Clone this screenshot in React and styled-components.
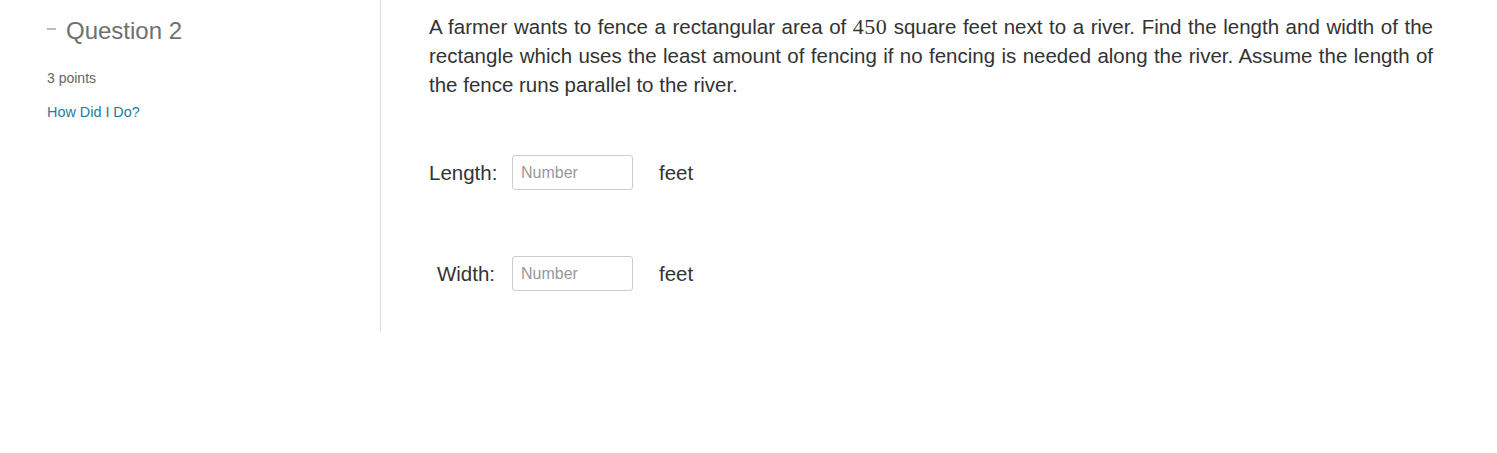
import React from 'react'
import styled, { createGlobalStyle } from 'styled-components'

const GlobalStyle = createGlobalStyle`
  body {
    margin: 0;
    background: #fff;
    font-family: "Liberation Sans", Arial, sans-serif;
  }
`;

const QuestionWrapper = styled.div`
  display: flex;
  width: 100%;
`;

const Sidebar = styled.div`
  box-sizing: border-box;
  width: 381px;
  min-height: 331px;
  padding: 16px 0 0 47px;
  border-right: 1px solid #dcdcdc;
`;

const Heading = styled.h2`
  margin: 0;
  font-size: 24px;
  font-weight: 400;
  line-height: 30px;
  color: #6f6f6f;
`;

const Dash = styled.span`
  display: inline-block;
  width: 9px;
  height: 2px;
  margin-right: 10px;
  background: #bdbdbd;
  vertical-align: middle;
  position: relative;
  top: -4px;
`;

const Points = styled.div`
  margin-top: 23px;
  font-size: 14px;
  line-height: 18px;
  color: #666;
`;

const HowLink = styled.a`
  display: block;
  margin-top: 16px;
  font-size: 14.4px;
  line-height: 18px;
  color: #1b7d9e;
  text-decoration: none;
  cursor: pointer;
`;

const Content = styled.div`
  box-sizing: border-box;
  flex: 1;
  padding: 12px 64px 0 48px;
`;

const Prompt = styled.p`
  margin: 0;
  font-size: 20.5px;
  line-height: 29px;
  color: #333;
  text-align: justify;
`;

const MathNum = styled.span`
  font-family: "Liberation Serif", "Times New Roman", serif;
  font-size: 22px;
  letter-spacing: 0.4px;
`;

const Answers = styled.div`
  display: flex;
  flex-direction: column;
  gap: 66px;
  margin-top: 56px;
`;

const Row = styled.div`
  display: flex;
  align-items: center;
  height: 35px;
`;

const Label = styled.label`
  width: ${p => p.$w}px;
  text-align: right;
  font-size: 20.5px;
  color: #333;
  margin-right: ${p => p.$gap}px;
`;

const NumberInput = styled.input`
  box-sizing: border-box;
  width: 121px;
  height: 35px;
  padding: 1px 8px 0;
  border: 1px solid #ccc;
  border-radius: 3px;
  font-family: "Liberation Sans", Arial, sans-serif;
  font-size: 16px;
  color: #333;
  outline: none;

  &::placeholder {
    color: #999;
  }
`;

const Unit = styled.span`
  margin-left: 26px;
  font-size: 20.5px;
  color: #333;
`;

export default function App() {
  return (
    <>
      <GlobalStyle />
      <QuestionWrapper>
        <Sidebar>
          <Heading><Dash />Question 2</Heading>
          <Points>3 points</Points>
          <HowLink>How Did I Do?</HowLink>
        </Sidebar>
        <Content>
          <Prompt>
            A farmer wants to fence a rectangular area of <MathNum>450</MathNum> square feet next to a river. Find the length and width of the rectangle which uses the least amount of fencing if no fencing is needed along the river. Assume the length of the fence runs parallel to the river.
          </Prompt>
          <Answers>
            <Row>
              <Label $w={68} $gap={15}>Length:</Label>
              <NumberInput placeholder="Number" />
              <Unit>feet</Unit>
            </Row>
            <Row>
              <Label $w={66} $gap={17}>Width:</Label>
              <NumberInput placeholder="Number" />
              <Unit>feet</Unit>
            </Row>
          </Answers>
        </Content>
      </QuestionWrapper>
    </>
  )
}
